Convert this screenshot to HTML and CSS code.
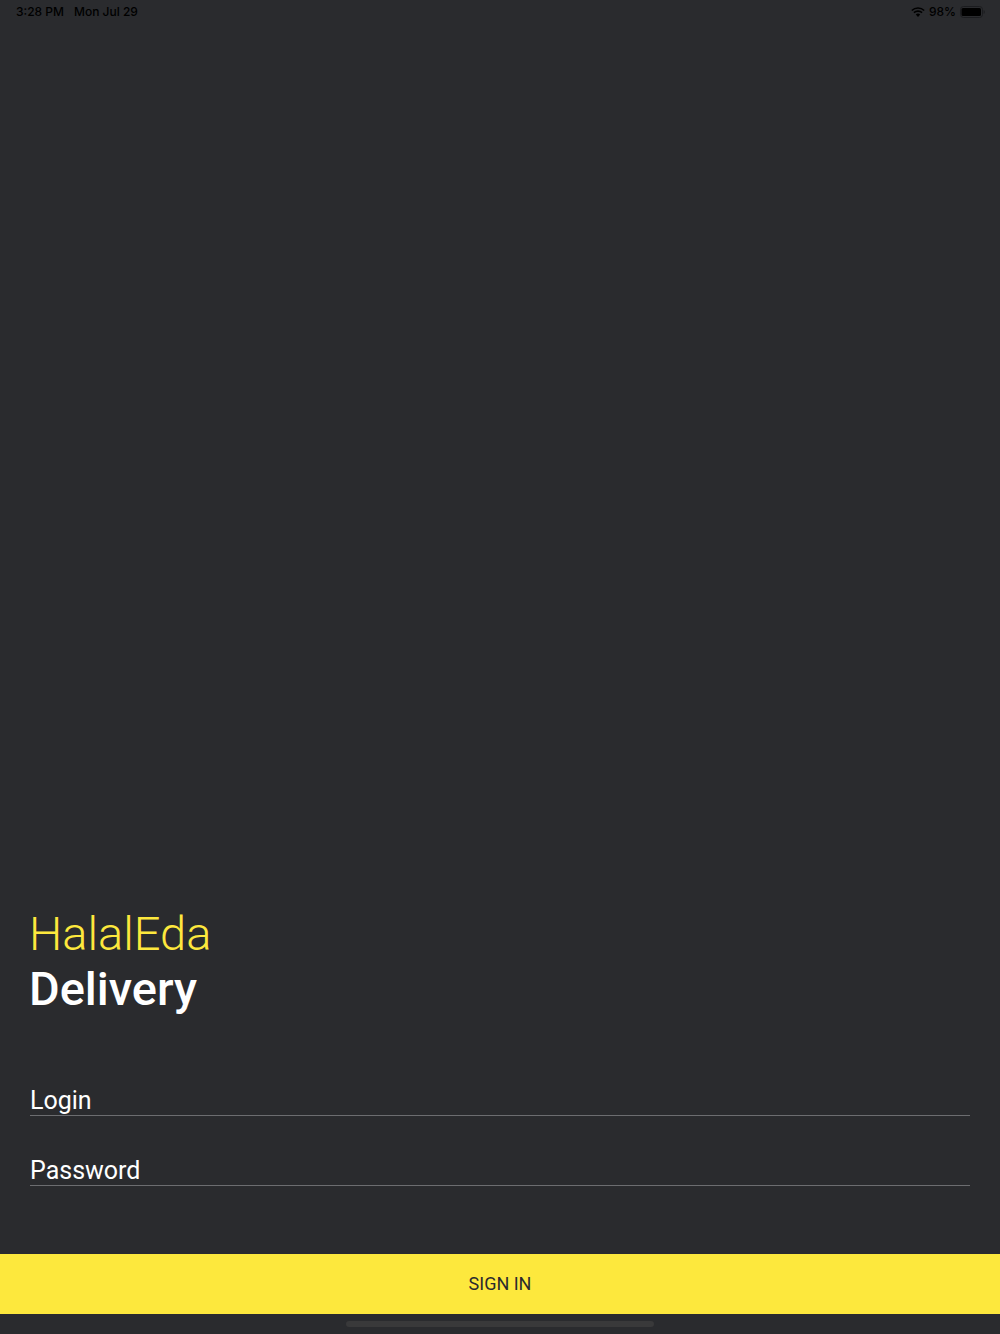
FILE: index.html
```html
<!DOCTYPE html>
<html lang="en">
<head>
<meta charset="utf-8">
<meta name="viewport" content="width=device-width, initial-scale=1">
<title>HalalEda Delivery</title>
<link rel="stylesheet" href="styles.css">
</head>
<body>
<header class="status">
  <div class="status-group status-left"><span>3:28 PM</span><span>Mon Jul 29</span></div>
  <div class="status-group status-right">
    <svg class="wifi" viewBox="0 0 14 10" aria-hidden="true"><path d="M.8 3.5a9 9 0 0 1 12.4 0M2.9 5.7a6 6 0 0 1 8.2 0" fill="none" stroke="currentColor" stroke-width="1.6"/><path d="M4.8 7.6a3.2 3.2 0 0 1 4.4 0L7 9.9z" fill="currentColor"/></svg>
    <span>98%</span>
    <svg class="battery" viewBox="0 0 25 12" aria-hidden="true"><rect x=".5" y=".5" width="22" height="11" rx="3" fill="none" stroke="#1b1c1f"/><rect x="1.5" y="2" width="19.5" height="8" rx="1.5" fill="currentColor"/><path d="M23.7 4v4q1.1-.5 1.1-2t-1.1-2z" fill="#1b1c1f"/></svg>
  </div>
</header>
<main class="screen">
  <h1 class="brand"><span class="brand-name">HalalEda</span><span class="brand-kind">Delivery</span></h1>
  <form class="form">
    <input class="field" type="text" placeholder="Login" aria-label="Login">
    <input class="field" type="password" placeholder="Password" aria-label="Password">
    <button class="submit" type="submit">SIGN IN</button>
  </form>
</main>
<footer class="home"><div class="home-bar"></div></footer>
</body>
</html>
```

FILE: styles.css
```css
* { box-sizing: border-box; }
body {
  margin: 0;
  min-height: 100vh;
  display: flex;
  flex-direction: column;
  background: #2a2b2e;
  color: #fff;
  font-family: Roboto, "Liberation Sans", sans-serif;
}
.status {
  display: flex;
  justify-content: space-between;
  height: 24px;
  padding: 0 15px 0 16px;
  color: #000;
  font: 500 12px/24px Inter, sans-serif;
}
.status-group { display: flex; align-items: center; }
.status-left { gap: 10px; }
.status-right { gap: 4px; }
.wifi { width: 14px; height: 10px; }
.battery { width: 25px; height: 12px; }
.screen {
  flex: 1;
  display: flex;
  flex-direction: column;
  justify-content: flex-end;
}
.brand {
  margin: 0 29px 54px;
  font-size: 47px;
  line-height: 55px;
}
.brand-name { display: block; color: #fde83d; font-weight: 300; }
.brand-kind { display: block; font-weight: 500; }
.form { display: flex; flex-direction: column; }
.field {
  height: 46px;
  margin: 0 30px 24px;
  padding: 15px 0 0;
  border: 0;
  border-bottom: 1px solid #6c6d70;
  border-radius: 0;
  background: transparent;
  color: #fff;
  font: 400 25px/30px Roboto, sans-serif;
  outline: 0;
}
.field::placeholder { color: #fff; opacity: 1; }
.submit {
  height: 60px;
  margin-top: 44px;
  border: 0;
  background: #fde83d;
  color: #2a2b2e;
  font: 400 18px/24px Roboto, sans-serif;
}
.home { display: flex; justify-content: center; height: 20px; padding-top: 7px; }
.home-bar { width: 308px; max-width: 60%; height: 6px; border-radius: 3px; background: #39393a; }
```
